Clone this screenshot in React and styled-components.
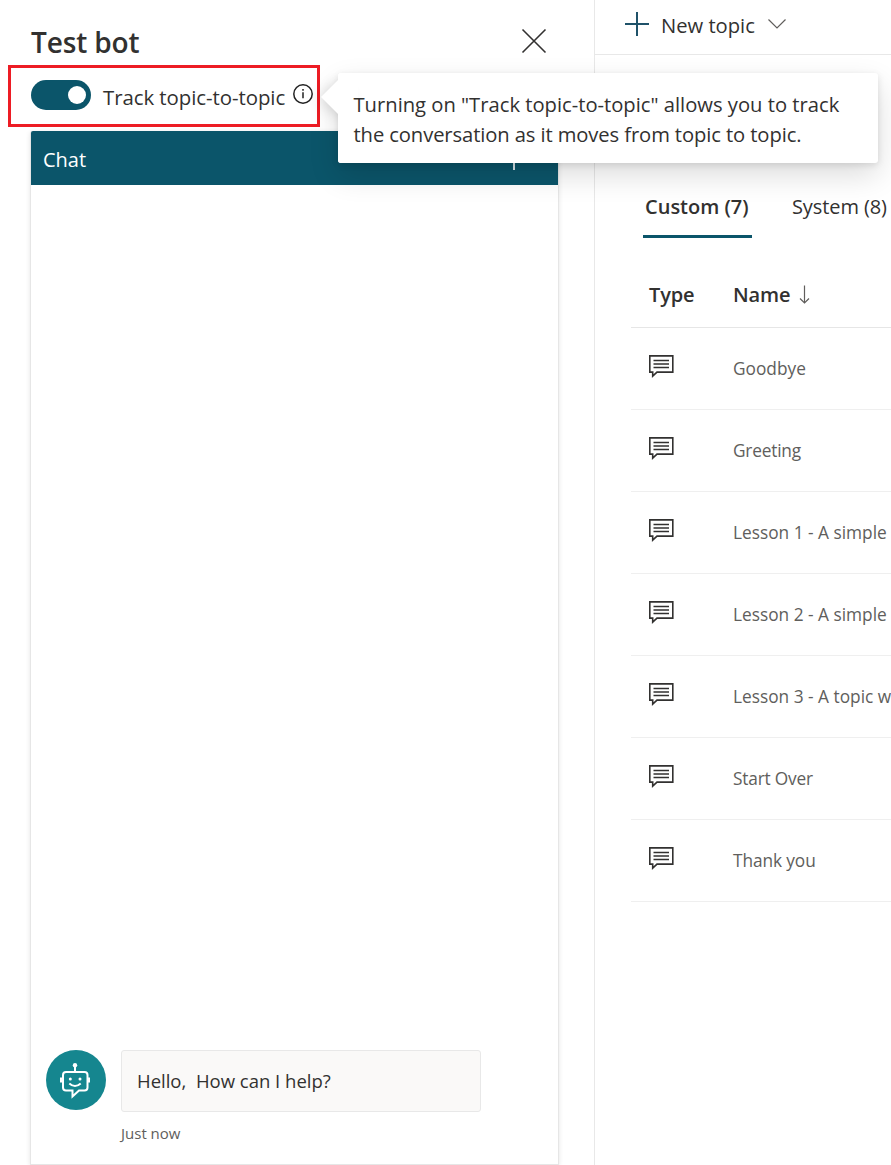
import React from "react";
import styled, { createGlobalStyle } from "styled-components";

const Global = createGlobalStyle`
  * { box-sizing: border-box; }
  body { margin: 0; background: #fff; overflow: hidden; font-family: "Open Sans", "Noto Sans", sans-serif; color: #323130; }
  svg { display: block; flex: none; }
`;

const Page = styled.div`
  position: relative;
  display: flex;
  width: 891px;
  height: 1165px;
  overflow: hidden;
`;
const Label = styled.span`
  white-space: pre;
  font-size: ${(p) => p.$size}px;
  letter-spacing: ${(p) => p.$track || 0}px;
  font-weight: ${(p) => p.$weight || 400};
  color: ${(p) => p.$color || "#323130"};
  line-height: ${(p) => p.$line || 28}px;
`;
const BotPanel = styled.section`
  width: 595px;
  flex: none;
  display: flex;
  flex-direction: column;
  padding: 23px 36px 0 30px;
  border-right: 1px solid #e8e8e8;
`;
const PanelHeader = styled.header`
  display: flex;
  justify-content: space-between;
  align-items: flex-start;
  height: 57px;
  padding: 0 11px 0 1px;
`;
const CloseButton = styled.button`
  border: 0;
  background: none;
  padding: 5px 0 0;
`;
const TrackRow = styled.div`
  position: relative;
  display: flex;
  height: 51px;
  padding-left: 1px;
`;
const Toggle = styled.span`
  width: 60px;
  height: 30px;
  border-radius: 15px;
  background: #0b556a;
  display: flex;
  align-items: center;
  justify-content: flex-end;
  padding-right: 5px;
`;
const Knob = styled.span`
  width: 18px;
  height: 18px;
  border-radius: 50%;
  background: #fff;
`;
const TrackLabel = styled.div`
  width: 201px;
  padding: 3px 0 0 12px;
  flex: none;
`;
const InfoIcon = styled.svg`
  margin-top: 3px;
`;
const Highlight = styled.div`
  position: absolute;
  left: -22px;
  top: -15px;
  width: 312px;
  height: 62px;
  border: 3px solid #ed1c24;
`;
const ChatWindow = styled.div`
  width: 529px;
  height: 1034px;
  display: flex;
  flex-direction: column;
  border: 1px solid #e6e6e6;
  border-top: 0;
  border-radius: 3px 3px 0 0;
  box-shadow: 0 1px 5px rgba(0, 0, 0, 0.1);
`;
const ChatHeader = styled.div`
  height: 54px;
  background: #0b556a;
  border-radius: 2px 2px 0 0;
  padding: 15px 43px 0 12px;
  display: flex;
  justify-content: space-between;
`;
const Caret = styled.i`
  width: 2px;
  height: 24px;
  background: #d9e6ea;
`;
const Messages = styled.div`
  flex: 1;
  display: flex;
  align-items: flex-end;
  padding: 0 0 18px 15px;
  gap: 15px;
`;
const Avatar = styled.svg`
  margin-bottom: 36px;
`;
const Message = styled.div`
  display: flex;
  flex-direction: column;
  gap: 8px;
`;
const Bubble = styled.div`
  width: 360px;
  height: 62px;
  border: 1px solid #e8e8e8;
  border-radius: 3px;
  background: #faf9f8;
  padding: 16px 15px;
`;
const TopicsPanel = styled.main`
  flex: 1;
  min-width: 0;
  overflow: hidden;
`;
const Toolbar = styled.div`
  height: 55px;
  border-bottom: 1px solid #e8e8e8;
  padding: 10px 0 0 30px;
  display: flex;
`;
const ToolbarText = styled.div`
  width: 118px;
  padding: 1px 0 0 11px;
`;
const Tabs = styled.nav`
  display: flex;
  margin: 137px 0 0 48px;
  gap: 38px;
`;
const Tab = styled.div`
  height: 46px;
  flex: none;
  width: 109px;
  padding: 1px 0 0 2px;
  border-bottom: 3px solid ${(p) => (p.$active ? "#0b556a" : "transparent")};
`;
const Table = styled.div`
  margin-left: 36px;
`;
const Row = styled.div`
  display: flex;
  height: ${(p) => (p.$head ? 90 : 82)}px;
  border-bottom: 1px solid ${(p) => (p.$head ? "#e6e6e6" : "#efefef")};
  padding: ${(p) => (p.$head ? "43px 0 0 18px" : "26px 0 0 17px")};
`;
const TypeCell = styled.div`
  width: ${(p) => (p.$head ? 84 : 85)}px;
  flex: none;
`;
const NameCell = styled.div`
  display: flex;
  gap: 9px;
  padding-top: ${(p) => (p.$head ? 0 : 1)}px;
  white-space: nowrap;
`;
const Tooltip = styled.div`
  position: absolute;
  left: 338px;
  top: 73px;
  width: 540px;
  height: 90px;
  padding: 16px 15.5px;
  border-radius: 3px;
  background: #fff;
  display: flex;
  flex-direction: column;
  box-shadow: 0 12px 30px rgba(0, 0, 0, 0.14), 0 2px 7px rgba(0, 0, 0, 0.11);
`;
const Beak = styled.i`
  position: absolute;
  left: -12px;
  top: 12px;
  width: 24px;
  height: 24px;
  background: #fff;
  transform: rotate(45deg);
  box-shadow: 0 3px 14px rgba(0, 0, 0, 0.16);
`;
const BeakCover = styled.i`
  position: absolute;
  left: 0;
  top: 0;
  width: 20px;
  height: 90px;
  border-radius: 3px;
  background: #fff;
`;
const TipText = styled(Label)`
  position: relative;
`;

const TopicIcon = () => (
  <svg width="28" height="26" viewBox="0 0 28 26" fill="none" stroke="#323130" strokeWidth="1.6">
    <path d="M1.800 1.900h23v16.200H9l-4.300 4v-4H1.800z" />
    <path d="M5.500 6.500h15.500M5.500 10h15.500M5.500 13.500h15.500" strokeWidth="1.600" />
  </svg>
);

const topics = [
  ["Goodbye", 0],
  ["Greeting", -0.2],
  ["Lesson 1 - A simple", 0],
  ["Lesson 2 - A simple", 0],
  ["Lesson 3 - A topic with", 0],
  ["Start Over", -0.2],
  ["Thank you", -0.1],
];

export default function App() {
  return (
    <Page>
      <Global />
      <BotPanel>
        <PanelHeader>
          <Label $size={28} $weight={600} $line={39} $track={-0.15}>Test bot</Label>
          <CloseButton aria-label="Close">
            <svg width="26" height="26" viewBox="0 0 26 26" stroke="#323130" strokeWidth="1.6">
              <path d="M1.500 1.500l23 23M24.500 1.500l-23 23" />
            </svg>
          </CloseButton>
        </PanelHeader>
        <TrackRow>
          <Toggle><Knob /></Toggle>
          <TrackLabel><Label $size={20.4} $track={-0.05}>Track topic-to-topic</Label></TrackLabel>
          <InfoIcon width="22" height="22" viewBox="0 0 22 22">
            <circle cx="11" cy="11" r="9.200" fill="none" stroke="#222" strokeWidth="1.500" />
            <path d="M11 9.200v6M11 6v1.800" stroke="#222" strokeWidth="1.500" />
          </InfoIcon>
          <Highlight />
        </TrackRow>
        <ChatWindow>
          <ChatHeader>
            <Label $size={20} $color="#fff">Chat</Label>
            <Caret />
          </ChatHeader>
          <Messages>
            <Avatar width="60" height="60" viewBox="0 0 60 60" fill="none" stroke="#fff" strokeWidth="2">
              <circle cx="30" cy="30" r="30" fill="#15868f" stroke="none" />
              <circle cx="29" cy="15.300" r="2.200" fill="#fff" stroke="none" />
              <path d="M29 16v6M20 22h18.500q3 0 3 3v12.500q0 3-3 3h-5.500l-6.500 6v-6h-6.500q-3 0-3-3v-12.500q0-3 3-3z" />
              <path d="M15.200 27.500v5M42.800 27.500v5" strokeWidth="2.400" />
              <path d="M23.300 33.500q5.700 5 11.400 0" />
              <circle cx="24.300" cy="29" r="1.500" fill="#fff" stroke="none" />
              <circle cx="34" cy="29" r="1.500" fill="#fff" stroke="none" />
            </Avatar>
            <Message>
              <Bubble><Label $size={18.5} $line={28}>Hello,  How can I help?</Label></Bubble>
              <Label $size={15} $line={26} $color="#605e5c">Just now</Label>
            </Message>
          </Messages>
        </ChatWindow>
      </BotPanel>
      <TopicsPanel>
        <Toolbar>
          <svg width="25" height="28" viewBox="0 0 25 28" stroke="#1f5269" strokeWidth="2">
            <path d="M0 14h24M12 2v24" />
          </svg>
          <ToolbarText><Label $size={20.2}>New topic</Label></ToolbarText>
          <svg width="18" height="28" viewBox="0 0 18 28" fill="none" stroke="#605e5c" strokeWidth="1.200">
            <path d="M.5 9.500l8.500 8.500 8.500-8.500" />
          </svg>
        </Toolbar>
        <Tabs>
          <Tab $active><Label $size={20} $weight={600}>Custom (7)</Label></Tab>
          <Tab><Label $size={20} $track={-0.1}>System (8)</Label></Tab>
        </Tabs>
        <Table>
          <Row $head>
            <TypeCell $head><Label $size={20} $weight={600} $track={-0.15}>Type</Label></TypeCell>
            <NameCell $head>
              <Label $size={20} $weight={600} $track={-0.1}>Name</Label>
              <svg width="11" height="28" viewBox="0 0 11 28" fill="none" stroke="#605e5c" strokeWidth="1.200">
                <path d="M5.500 4.500v17.500M1 17.500l4.500 4.500 4.500-4.500" />
              </svg>
            </NameCell>
          </Row>
          {topics.map(([name, track]) => (
            <Row key={name}>
              <TypeCell><TopicIcon /></TypeCell>
              <NameCell><Label $size={17.3} $track={track} $color="#605e5c">{name}</Label></NameCell>
            </Row>
          ))}
        </Table>
      </TopicsPanel>
      <Tooltip>
        <Beak />
        <BeakCover />
        <TipText $size={20.2} $line={30}>Turning on "Track topic-to-topic" allows you to track</TipText>
        <TipText $size={20.2} $line={30} $track={-0.1}>the conversation as it moves from topic to topic.</TipText>
      </Tooltip>
    </Page>
  );
}
